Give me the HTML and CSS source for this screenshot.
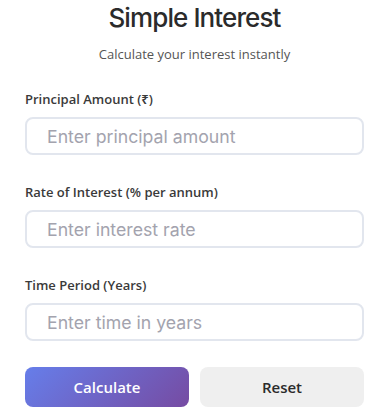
FILE: index.html
```html
<!DOCTYPE html>
<html lang="en">
<head>
    <meta charset="UTF-8">
    <meta name="viewport" content="width=device-width, initial-scale=1.0">
    <title>Simple Interest Calculator</title>
    <link rel="stylesheet" href="styles.css">
</head>
<body>
    <div class="calculator">
        <h1 class="title">Simple Interest</h1>
        <p class="subtitle">Calculate your interest instantly</p>

        <div class="form-group">
            <label for="principal">Principal Amount (₹)</label>
            <input type="number" id="principal" placeholder="Enter principal amount">
        </div>
        <div class="form-group">
            <label for="rate">Rate of Interest (% per annum)</label>
            <input type="number" id="rate" placeholder="Enter interest rate">
        </div>
        <div class="form-group">
            <label for="time">Time Period (Years)</label>
            <input type="number" id="time" placeholder="Enter time in years">
        </div>

        <div class="buttons">
            <button class="btn-calculate">Calculate</button>
            <button class="btn-reset">Reset</button>
        </div>
    </div>
</body>
</html>
```

FILE: styles.css
```css
body {
    margin: 0;
    background: #ffffff;
    font-family: "Open Sans", "Noto Sans", sans-serif;
}
.calculator {
    padding: 2px 25px 0 25px;
}
.title {
    margin: 0;
    text-align: center;
    font-family: Inter, "Open Sans", sans-serif;
    font-size: 26px;
    font-weight: 500;
    line-height: 32px;
    letter-spacing: -0.9px;
    color: #2b2b2b;
}
.subtitle {
    margin: 11px 0 27px 0;
    text-align: center;
    font-size: 13px;
    line-height: 18px;
    color: #555555;
}
.form-group {
    margin-bottom: 28px;
}
.form-group label {
    display: block;
    margin-bottom: 9px;
    font-size: 13px;
    font-weight: 600;
    line-height: 18px;
    color: #3a3a3a;
}
.form-group input {
    display: block;
    width: 100%;
    height: 38px;
    box-sizing: border-box;
    padding: 0 20px;
    border: 2px solid #e2e6ee;
    border-radius: 8px;
    font-family: Inter, "Open Sans", sans-serif;
    font-size: 17.7px;
    color: #333333;
    outline: none;
}
.form-group input::placeholder {
    color: #a3a3ae;
}
.buttons {
    display: flex;
    gap: 11px;
    margin-top: -2px;
}
.buttons button {
    flex: 1;
    height: 40px;
    border: none;
    border-radius: 8px;
    font-family: "Open Sans", sans-serif;
    font-size: 15px;
    font-weight: 600;
    cursor: pointer;
}
.btn-calculate {
    background: linear-gradient(135deg, #667eea 0%, #764ba2 100%);
    color: #ffffff;
}
.btn-reset {
    background: #efefef;
    color: #2b2b2b;
}
```
